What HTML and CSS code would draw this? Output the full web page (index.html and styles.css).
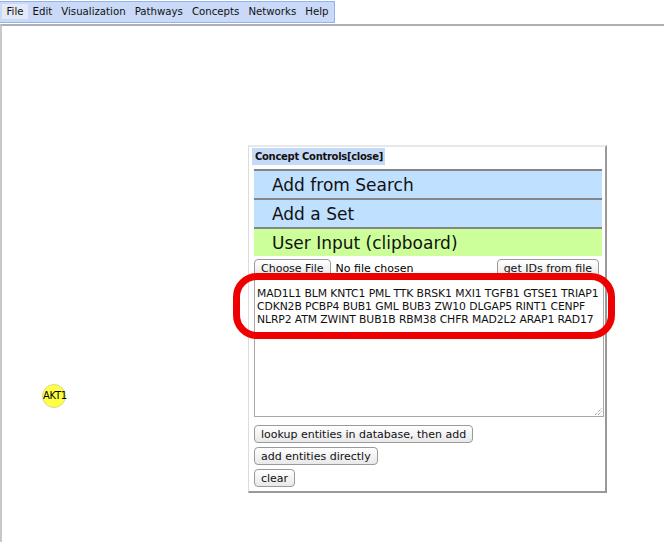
FILE: index.html
```html
<!DOCTYPE html>
<html>
<head>
<meta charset="utf-8">
<link rel="stylesheet" href="styles.css">
</head>
<body>
<div class="menubar">
  <span class="mi active">File</span>
  <span class="mi">Edit</span>
  <span class="mi">Visualization</span>
  <span class="mi">Pathways</span>
  <span class="mi">Concepts</span>
  <span class="mi">Networks</span>
  <span class="mi">Help</span>
</div>
<div class="canvas">
  <div class="node">AKT1</div>
  <div class="panel">
    <div class="ptitle">Concept Controls[close]</div>
    <div class="acc blue">Add from Search</div>
    <div class="acc blue">Add a Set</div>
    <div class="acc green">User Input (clipboard)</div>
    <div class="filerow">
      <div class="fileleft"><button class="btn">Choose File</button><span class="nofile">No file chosen</span></div>
      <button class="btn">get IDs from file</button>
    </div>
    <div class="ta">MAD1L1 BLM KNTC1 PML TTK BRSK1 MXI1 TGFB1 GTSE1 TRIAP1 CDKN2B PCBP4 BUB1 GML BUB3 ZW10 DLGAP5 RINT1 CENPF NLRP2 ATM ZWINT BUB1B RBM38 CHFR MAD2L2 ARAP1 RAD17<svg class="grip" width="8" height="8" viewBox="0 0 8 8"><path d="M1 8 L8 1 M4 8 L8 4" stroke="#777" stroke-width="1" stroke-dasharray="1 1"/></svg></div>
    <div class="actions">
      <button class="btn">lookup entities in database, then add</button>
      <button class="btn">add entities directly</button>
      <button class="btn">clear</button>
    </div>
  </div>
  <div class="highlight"></div>
</div>
</body>
</html>
```
FILE: styles.css
```css
html, body { margin: 0; padding: 0; background: #fff; }
body { font-family: "DejaVu Sans", "Liberation Sans", sans-serif; width: 664px; height: 542px; overflow: hidden; position: relative; }
.menubar {
  display: inline-flex; align-items: center; height: 20px;
  background: #c9d9f7; border: 1px solid #93b3ef; border-left: none;
  padding: 0 1px 0 2px; font-size: 10.2px; color: #111;
}
.mi { padding: 2px 4.5px; }
.mi.active { background: #e3eaf5; }
.canvas {
  position: absolute; left: 0; top: 24px; width: 664px; height: 520px;
  border-top: 2px solid #b0b0b0; border-left: 2px solid #c8c8c8; box-sizing: border-box;
}
.node {
  position: absolute; left: 40px; top: 358px; width: 22px; height: 22px; border-radius: 50%;
  background: #ffff44; border: 1px solid #d8d8a0; font-size: 10px; line-height: 22px; text-align: center;
  letter-spacing: -0.3px; color: #000;
}
.panel {
  position: absolute; left: 246px; top: 119px; width: 359px; height: 348px; box-sizing: border-box;
  border-top: 2px solid #e8e8e8; border-left: 1px solid #dcdcdc; border-right: 2px solid #999; border-bottom: 2px solid #999;
  padding: 1px 3px 0 3px; background: #fff;
}
.ptitle {
  width: max-content; background: #c5daf7; font-size: 10px; line-height: 12px; font-weight: bold; padding: 3px 2px 2px 3px; color: #111;
  letter-spacing: -0.3px;
}
.acc {
  font-size: 17px; height: 29px; line-height: 28px; padding-left: 18px; margin-left: 2px; margin-right: 0;
  border-top: 2px solid #858585; color: #111; box-sizing: border-box;
}
.acc.blue { background: #c0e0ff; }
.acc.green { background: #ccff99; }
.ptitle + .acc { margin-top: 4px; }
.filerow { display: flex; justify-content: space-between; align-items: center; margin-top: 3px; margin-left: 2px; margin-right: 3px; }
.fileleft { display: flex; align-items: center; }
.nofile { font-size: 11px; margin-left: 5px; }
.btn {
  font-family: "DejaVu Sans", sans-serif; font-size: 11px; height: 18px; padding: 0 6px;
  border: 1px solid #9a9a9a; border-radius: 4px; background: linear-gradient(#ffffff, #e8e8e8); color: #111;
}
.ta {
  position: relative; margin-top: 2px; margin-left: 2px; margin-right: -2px; height: 138px; border: 1px solid #a8a8a8; border-top-color: #888; box-sizing: border-box;
  font-size: 10.8px; line-height: 13px; padding: 7px 2px 4px 2px; color: #111; letter-spacing: -0.1px;
}
.grip { position: absolute; right: 1px; bottom: 1px; }
.actions { display: flex; flex-direction: column; align-items: flex-start; gap: 4px; margin-top: 8px; margin-left: 2px; }
.highlight {
  position: absolute; left: 231px; top: 247px; width: 382px; height: 66px; box-sizing: border-box;
  border: 7px solid #ee0000; border-radius: 24px;
}
```
